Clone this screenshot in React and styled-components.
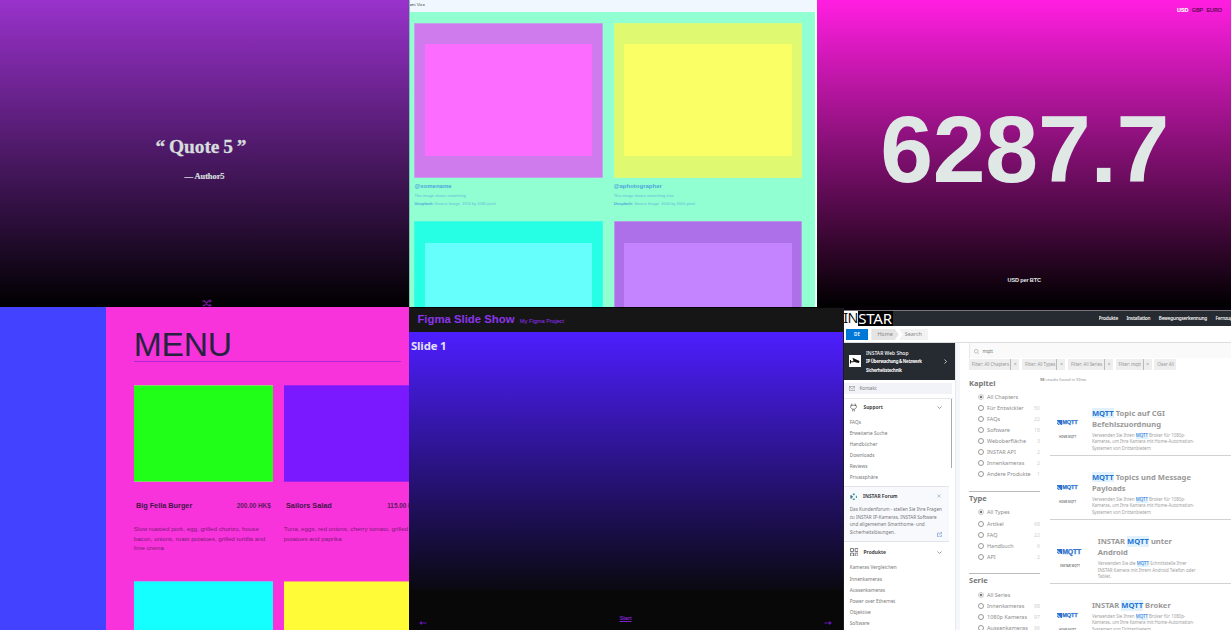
import React from "react";
import styled, { createGlobalStyle } from "styled-components";

const Global = createGlobalStyle`
  * { box-sizing: border-box; }
  html, body { margin: 0; padding: 0; overflow: hidden; background: #060008; }
`;
const sans = `"Liberation Sans", Arial, sans-serif`;
const noto = `"Noto Sans", "Open Sans", sans-serif`;

const Board = styled.main`
  width: 1231px; height: 630px; overflow: hidden;
  display: grid; grid-template-rows: 307px 323px;
  font-family: ${sans};
`;
const TopRow = styled.div`display: grid; grid-template-columns: 409px 408.4px 1fr; min-width: 0;`;
const BottomRow = styled.div`display: grid; grid-template-columns: 409px 435px 387px; min-width: 0;`;

/* Quote */
const QuotePanel = styled.section`
  background: linear-gradient(#9932cc, #000);
  display: flex; flex-direction: column; align-items: center;
  padding-top: 134px; color: #d6dddd; font-family: "Liberation Serif", serif; font-weight: 700;
`;
const Quote = styled.div`
  font-size: 19.4px; line-height: 26px; word-spacing: -0.9px; letter-spacing: -0.05px; padding-right: 7px;
  -webkit-text-stroke: 0.3px currentColor;
`;
const Author = styled.div`
  font-size: 8.5px; line-height: 12px; margin-top: 10px; letter-spacing: -0.1px;
  -webkit-text-stroke: 0.2px currentColor;
`;
const Shuffle = styled.svg`width: 10px; height: 8px; margin-top: auto; margin-left: 5px; display: block;`;

/* Gallery */
const Gallery = styled.section`
  background: #92ffd2; border-right: 2px solid #eafff6; border-left: 1px solid #78c8ad;
  overflow: hidden; display: flex; flex-direction: column;
`;
const GalleryBar = styled.header`
  flex: none; height: 12.4px; background: #f0f7ff; display: flex;
`;
const GalleryBrand = styled.div`
  width: 15.2px; overflow: hidden; display: flex; justify-content: flex-end; white-space: nowrap;
  font-size: 4.4px; line-height: 10px; color: #444;
`;
const PhotoGrid = styled.div`
  display: grid; grid-template-columns: 188.6px 188.6px; column-gap: 10.7px;
  grid-auto-rows: 198.4px; padding: 10.3px 0 0 4.4px;
`;
const Photo = styled.figure`margin: 0;`;
const Mat = styled.div`
  height: 155.2px; padding: 21.8px 10.6px; background: ${(p) => p.$mat};
  box-shadow: inset 0 0 0 0.8px ${(p) => p.$edge};
`;
const Print = styled.div`height: 100%; background: ${(p) => p.$fill};`;
const Handle = styled.h3`margin: 4.2px 0 0; font-size: 6px; line-height: 8px; color: #4da5dc;`;
const Caption = styled.p`
  margin: ${(p) => p.$gap}px 0 0; font-size: 4px; line-height: 6px; color: #62b9dc; white-space: nowrap;
  b { color: #4da5dc; }
`;

/* Ticker */
const Ticker = styled.section`
  background: linear-gradient(#ff1ee0, #ff1ee0 0.5%, #000);
  display: flex; flex-direction: column; align-items: center; color: #e0e8e6; font-weight: 700;
`;
const Currencies = styled.nav`
  align-self: flex-end; display: flex; gap: 3.3px; padding: 7px 9px 0 0;
  font-size: 5.4px; line-height: 7px; font-weight: 400; color: #52084a;
`;
const Currency = styled.span`
  ${(p) => p.$on && "color: #fff; font-weight: 700;"}
  -webkit-text-stroke: 0.15px currentColor;
`;
const Rate = styled.div`font-size: 95px; line-height: 100px; margin: 85px 0 0 1px; letter-spacing: -0.3px;`;
const Unit = styled.div`font-size: 5.6px; line-height: 8px; margin-top: 77px; letter-spacing: -0.17px;`;

/* Menu */
const MenuPanel = styled.section`
  display: grid; grid-template-columns: 105.7px 1fr; overflow: hidden; background: #f933dc;
`;
const MenuSide = styled.aside`background: #4343ff;`;
const MenuBody = styled.div`padding: 19px 0 0 28px; min-width: 0;`;
const MenuTitle = styled.h1`
  margin: 0; width: 267.3px; height: 35.8px; font-weight: 400; font-size: 33.6px; line-height: 37px;
  letter-spacing: -0.2px; color: #25233f; border-bottom: 1px solid #b126d6;
`;
const Dishes = styled.div`
  margin-top: 22.8px; display: grid; grid-template-columns: 139.3px 139.3px; column-gap: 10.8px; grid-auto-rows: 196.3px;
`;
const Dish = styled.article`min-width: 0;`;
const Plate = styled.div`
  height: 97px; background: ${(p) => p.$fill};
  border-top: 1px solid ${(p) => p.$edge}; border-bottom: 1px solid ${(p) => p.$edge};
`;
const DishHead = styled.div`
  display: flex; justify-content: space-between; align-items: center; height: 9px; padding: 0 2.2px;
  margin-top: 19.5px; color: #3d1747; font-weight: 700; font-size: 7.3px; white-space: nowrap;
`;
const Price = styled.span`font-size: 6.4px; color: #5c1c62;`;
const DishText = styled.p`margin: 14.4px 0 0; font-size: 6.2px; line-height: 9.35px; color: #7b1c76; white-space: pre;`;

/* Slides */
const Slides = styled.section`
  margin-top: 0.7px; background: #080808; border-right: 1.6px solid #1c1a20;
  display: flex; flex-direction: column; overflow: hidden;
`;
const SlidesBar = styled.header`
  flex: none; height: 24px; padding-left: 8.4px; background: #161616; display: flex; gap: 5.3px; color: #8c35ea;
`;
const SlidesTitle = styled.h2`margin: 0; font-size: 11.35px; line-height: 23px;`;
const SlidesSub = styled.span`font-size: 5.7px; line-height: 26px; color: #7a29d0; -webkit-text-stroke: 0.15px currentColor;`;
const Stage = styled.div`
  height: 258.6px; padding: 5px 2px; background: linear-gradient(#4d1eff, #0a0910);
  color: #e3e0fa; font: 700 11.4px/18px "Open Sans", ${noto}; letter-spacing: -0.2px;
`;
const Controls = styled.footer`
  flex: 1; display: flex; justify-content: space-between; padding: 23.6px 11px 0 10px; color: #6a1cc0;
`;
const Arrow = styled.svg`width: 8px; height: 4px; margin-top: 7px;`;
const Start = styled.a`
  font-size: 5.7px; line-height: 8px; text-decoration: underline; color: #7a22c8; -webkit-text-stroke: 0.2px currentColor;
`;

/* Support site */
const Site = styled.section`
  border-top: 3.3px solid #07000a; background: #fff; overflow: hidden;
  display: flex; flex-direction: column; font-family: ${noto}; color: #777; min-width: 0;
`;
const SiteBar = styled.header`
  flex: none; height: 16px; background: #262a31; border-top: 0.7px solid #777; display: flex; justify-content: space-between;
`;
const Brand = styled.div`
  display: flex; width: 49.5px; font-size: 15px; line-height: 14.6px; height: 15px; white-space: nowrap;
`;
const BrandIn = styled.span`
  width: 14.3px; background: #fff; color: #111; font-size: 14.4px; letter-spacing: -0.5px; text-indent: -0.8px;
`;
const BrandStar = styled.span`width: 35.2px; background: #000; color: #fff; letter-spacing: -0.25px;`;
const SiteNav = styled.nav`
  width: 132.5px; display: flex; gap: 8.4px; white-space: nowrap; overflow: hidden;
  font-size: 4.7px; line-height: 14.6px; color: #f4f4f4; font-weight: 600; letter-spacing: -0.19px;
`;
const Crumbs = styled.div`
  flex: none; height: 17.2px; padding: 2.8px 2px; display: flex; border-bottom: 1px solid #ddd;
  font-size: 5.4px; line-height: 11px; text-align: center;
`;
const Lang = styled.span`width: 22px; height: 11.3px; background: #0078d7; color: #fff; font-size: 4.5px; font-weight: 600; margin-right: 3.3px;`;
const Crumb = styled.span`
  width: ${(p) => p.$w}px; height: 11.3px; background: ${(p) => p.$bg}; color: #888;
  clip-path: ${(p) => (p.$point ? "polygon(0 0, 85% 0, 100% 50%, 85% 100%, 0 100%)" : "polygon(0 0, 100% 0, 100% 100%, 0 100%, 14% 50%)")};
`;
const SiteBody = styled.div`display: grid; grid-template-columns: 111px 5px 271px; flex: 1; min-height: 0;`;
const Gutter = styled.div`background: #f6f7fb; border-left: 1px solid #e6e8f2;`;
const Sidebar = styled.aside`min-width: 0; color: #777; font-size: 4.75px;`;
const Promo = styled.div`
  height: 36.6px; background: #262a31; color: #fff; display: flex; align-items: center; padding: 0 8px 0 5px;
`;
const PromoIcon = styled.svg`width: 12px; height: 12px; margin-right: 5px; background: #fff;`;
const PromoText = styled.div`flex: 1; font-size: 4.3px; line-height: 8.6px; font-weight: 700; white-space: pre; letter-spacing: -0.24px;`;
const PromoName = styled.div`font-size: 5px; font-weight: 500; letter-spacing: 0;`;
const Glyph = styled.svg`
  width: ${(p) => p.$w}px; height: ${(p) => p.$h || p.$w}px; fill: none; stroke: ${(p) => p.$c || "#777"};
  stroke-width: ${(p) => p.$s || 1}; flex: none;
`;
const Contact = styled.div`
  margin: 3px 3.5px 4px 0; height: 11.2px; background: #f2f3f9; display: flex; align-items: center;
  gap: 4px; padding-left: 5px;
`;
const Scroll = styled.div`
  border-top: 1px solid #e5e5ea; margin: 0 2px 2.2px 0;
  background: linear-gradient(#aaa, #aaa) right 1px top / 1px 69px no-repeat;
`;
const SideHead = styled.div`
  height: ${(p) => p.$h}px; display: flex; align-items: center; color: #444; font-weight: 700; font-size: 4.85px;
  padding: 0 ${(p) => p.$r || 11.5}px 0 5.5px; gap: ${(p) => p.$gap || 5.5}px;
`;
const SideLabel = styled.span`flex: 1;`;
const SideList = styled.div`padding: ${(p) => p.$t}px 0 0 5.7px; line-height: 11.15px; white-space: nowrap;`;
const Forum = styled.div`
  margin-right: 6px; height: 56.5px; background: #f8f9fd; border-top: 1px solid #e2e4ea; border-bottom: 1px solid #e2e4ea;
  display: flex; flex-direction: column;
`;
const ForumText = styled.p`margin: 0; padding-left: 5.7px; line-height: 7.45px; font-size: 4.65px; white-space: pre;`;
const ForumLink = styled.div`display: flex; justify-content: flex-end; padding-right: 7px; margin-top: -4.4px;`;

const Content = styled.div`min-width: 0; padding-left: 9px; background: #fff;`;
const SearchBox = styled.div`
  height: 15.2px; background: #fafafa; border-left: 1px solid #e8e8e8; display: flex; align-items: center;
  gap: 3px; padding: 1px 0 0 4px; font-size: 4.6px;
`;
const Tags = styled.div`display: flex; gap: 2.7px; height: 11px; padding-top: 0.6px;`;
const Tag = styled.span`
  display: flex; width: ${(p) => p.$w}px; height: 10.6px; background: #eeeeee; color: #969696;
  font-size: 4.35px; line-height: 10.6px; white-space: nowrap; justify-content: space-between; padding-left: 2.8px;
`;
const TagX = styled.span`width: 9px; border-left: 1px solid #bbb; text-align: center; font-size: 4.5px;`;
const Columns = styled.div`display: grid; grid-template-columns: 71px 191px;`;
const Filters = styled.div`padding-top: 8.4px;`;
const FilterGroup = styled.div`height: ${(p) => p.$h}px; border-bottom: ${(p) => (p.$last ? 0 : 1)}px solid #bbb; margin-bottom: 1px;`;
const FilterName = styled.h4`margin: 0; font-size: 7.5px; line-height: 11px; color: #777; height: 13.3px;`;
const Option = styled.div`
  height: ${(p) => (p.$all ? 11.8 : 10.95)}px; display: flex; align-items: center; padding-left: 9px; gap: 3px;
  font-size: 5.5px; color: #8b8b8b; white-space: nowrap;
`;
const Radio = styled.i`
  width: 6px; height: 6px; border-radius: 50%; border: 0.8px solid #999; flex: none;
  ${(p) => p.$on && "background: radial-gradient(#777 35%, #eee 55%); border-color: #ccc;"}
`;
const Count = styled.span`margin-left: auto; color: #d0d0d0; font-size: 5.2px;`;
const Results = styled.div`min-width: 0;`;
const Found = styled.div`font-size: 4px; line-height: 6px; height: 22.2px; padding-top: 8px; color: #909090;`;
const Result = styled.article`
  height: 64.1px; margin-left: 10px; padding: 16.5px 0 0 7px; display: grid; border-bottom: 1px solid #d2d2d2;
  grid-template-columns: ${(p) => (p.$wide ? 40.7 : 34.9)}px 1fr;
`;
const Thumb = styled.div`
  width: ${(p) => (p.$wide ? 26 : 21)}px; padding-top: 11.4px; text-align: center;
  font: 600 ${(p) => (p.$wide ? 3 : 2.8)}px/6px ${noto}; color: #777;
`;
const MqttLogo = styled.div`
  display: flex; align-items: center; gap: 0.2px; height: 7px; margin-bottom: 8px; color: #2d72cf;
  font: 700 ${(p) => (p.$wide ? 6.9 : 5.7)}px/7px ${sans}; letter-spacing: -0.2px; -webkit-text-stroke: 0.25px currentColor;
`;
const ResultTitle = styled.h3`margin: 0 0 1.3px; font-size: 7.6px; line-height: 11.2px; color: #999; white-space: pre;`;
const ResultText = styled.p`margin: 0; font-size: 4.38px; line-height: 6.6px; color: #a0a0a0; white-space: pre;`;
const Mark = styled.mark`display: inline-block; line-height: 1.35; margin: -0.1em 0; background: #e2f2fd; color: #2474d4;`;

const photos = [
  { mat: "#cf7bee", edge: "#bfaee6", fill: "#fc6cff", name: "@somename", text: "This image shows something", size: "1920 by 1080" },
  { mat: "#dff970", edge: "#d2fb86", fill: "#faff65", name: "@aphotographer", text: "This image shows something else", size: "4000 by 3000" },
  { mat: "#26ffe4", edge: "#50fadc", fill: "#66fffb" },
  { mat: "#ae70e8", edge: "#b6a5e4", fill: "#c584ff" },
];
const dishes = [
  { fill: "#20ff18", edge: "#8ccf70", name: "Big Fella Burger", price: "200.00 HK$", text: "Slow roasted pork, egg, grilled chorizo, house\nbacon, onions, roast potatoes, grilled tortilla and\nlime crema" },
  { fill: "#7a18ff", edge: "#a022f2", name: "Sailors Salad", price: "115.00 HK$", text: "Tuna, eggs, red onions, cherry tomato, grilled\npotatoes and paprika" },
  { fill: "#14ffff", edge: "#76b9ef" },
  { fill: "#fffb37", edge: "#fc9c82" },
];
const supportLinks = ["FAQs", "Erweiterte Suche", "Handbücher", "Downloads", "Reviews", "Privatsphäre"];
const productLinks = ["Kameras Vergleichen", "Innenkameras", "Aussenkameras", "Power over Ethernet", "Objektive", "Software"];
const filters = [
  { name: "Kapitel", h: 114.5, all: "All Chapters", items: [["Für Entwickler", 50], ["FAQs", 22], ["Software", 18], ["Weboberfläche", 3], ["INSTAR API", 2], ["Innenkameras", 2], ["Andere Produkte", 1]] },
  { name: "Type", h: 81.2, all: "All Types", items: [["Artikel", 68], ["FAQ", 22], ["Handbuch", 6], ["API", 2]] },
  { name: "Serie", h: 60, all: "All Series", items: [["Innenkameras", 98], ["1080p Kameras", 97], ["Aussenkameras", 96]] },
];
const brokerText = ["Verwenden Sie Ihren ", " Broker für 1080p-\nKameras, um Ihre Kamera mit Home-Automation-\nSystemen von Drittanbietern"];
const results = [
  { title: ["", " Topic auf CGI\nBefehlszuordnung"], text: brokerText, cap: "HOME MQTT" },
  { title: ["", " Topics und Message\nPayloads"], text: brokerText, cap: "HOME MQTT" },
  { wide: true, title: ["INSTAR ", " unter\nAndroid"], text: ["Verwenden Sie die ", "-Schnittstelle Ihrer\nINSTAR Kamera mit Ihrem Android Telefon oder\nTablet."], cap: "INSTAR MQTT" },
  { title: ["INSTAR ", " Broker"], text: brokerText, cap: "HOME MQTT" },
];
const tags = [["Filter: All Chapters", 50.4], ["Filter: All Types", 43.4], ["Filter: All Series", 44.8], ["Filter: mqtt", 36]];

const Marked = ({ parts }) => <>{parts[0]}<Mark>MQTT</Mark>{parts[1]}</>;
const Chevron = () => <Glyph viewBox="0 0 10 6" $w={5} $h={3} $s={1.4}><path d="M1 1l4 4 4-4" /></Glyph>;

const App = () => (
  <>
    <Global />
    <Board>
      <TopRow>
        <QuotePanel>
          <Quote>“ Quote 5 ”</Quote>
          <Author>— Author5</Author>
          <Shuffle viewBox="0 0 20 16" fill="none" stroke="#6a1695" strokeWidth="2.6">
            <path d="M1 4h4l8 9h4M1 13h4l8-9h4" /><path d="M15 0l5 4-5 4zM15 9l5 4-5 3z" fill="#6a1695" stroke="none" />
          </Shuffle>
        </QuotePanel>
        <Gallery>
          <GalleryBar><GalleryBrand>Miami Vice</GalleryBrand></GalleryBar>
          <PhotoGrid>
            {photos.map((p) => (
              <Photo key={p.fill}>
                <Mat $mat={p.mat} $edge={p.edge}><Print $fill={p.fill} /></Mat>
                {p.name && (
                  <>
                    <Handle>{p.name}</Handle>
                    <Caption $gap={2.9}>{p.text}</Caption>
                    <Caption $gap={2.3}><b>Unsplash:</b> Source Image: {p.size} pixel.</Caption>
                  </>
                )}
              </Photo>
            ))}
          </PhotoGrid>
        </Gallery>
        <Ticker>
          <Currencies><Currency $on>USD</Currency><Currency>GBP</Currency><Currency>EURO</Currency></Currencies>
          <Rate>6287.7</Rate>
          <Unit>USD per BTC</Unit>
        </Ticker>
      </TopRow>
      <BottomRow>
        <MenuPanel>
          <MenuSide />
          <MenuBody>
            <MenuTitle>MENU</MenuTitle>
            <Dishes>
              {dishes.map((d) => (
                <Dish key={d.fill}>
                  <Plate $fill={d.fill} $edge={d.edge} />
                  {d.name && (
                    <>
                      <DishHead>{d.name}<Price>{d.price}</Price></DishHead>
                      <DishText>{d.text}</DishText>
                    </>
                  )}
                </Dish>
              ))}
            </Dishes>
          </MenuBody>
        </MenuPanel>
        <Slides>
          <SlidesBar><SlidesTitle>Figma Slide Show</SlidesTitle><SlidesSub>My Figma Project</SlidesSub></SlidesBar>
          <Stage>Slide 1</Stage>
          <Controls>
            <Arrow viewBox="0 0 16 8"><path d="M0 4l6-4v2.8h9v2.4H6V8z" fill="#6514b8" /></Arrow>
            <Start>Start</Start>
            <Arrow viewBox="0 0 16 8"><path d="M16 4l-6-4v2.8H1v2.4h9V8z" fill="#6514b8" /></Arrow>
          </Controls>
        </Slides>
        <Site>
          <SiteBar>
            <Brand><BrandIn>IN</BrandIn><BrandStar>STAR</BrandStar></Brand>
            <SiteNav><span>Produkte</span><span>Installation</span><span>Bewegungserkennung</span><span>Fernzugriff</span></SiteNav>
          </SiteBar>
          <Crumbs>
            <Lang>DE</Lang><Crumb $w={27.5} $bg="#e4e4e4" $point>Home</Crumb><Crumb $w={29} $bg="#f2f2f2">Search</Crumb>
          </Crumbs>
          <SiteBody>
            <Sidebar>
              <Promo>
                <PromoIcon viewBox="0 0 12 12">
                  <path d="M3.500 2.800L10.500 6 10 8 7 7.400 4.500 6.500z" fill="#111" /><path d="M1.500 5v3.500M1.500 6.800h3l1-1.500" fill="none" stroke="#111" />
                </PromoIcon>
                <PromoText><PromoName>INSTAR Web Shop</PromoName>{"IP Überwachung & Netzwerk\nSicherheitstechnik"}</PromoText>
                <Glyph viewBox="0 0 6 10" $w={3} $h={5} $c="#fff" $s={1.4}><path d="M1 1l4 4-4 4" /></Glyph>
              </Promo>
              <Contact>
                <Glyph viewBox="0 0 12 9" $w={6.4} $h={5}><path d="M.5.5h11v8H.5zM.5 1L6 5.500 11.500 1" /></Glyph>Kontakt
              </Contact>
              <Scroll>
                <SideHead $h={16.4} $gap={7}>
                  <Glyph viewBox="0 0 12 16" $w={7} $h={9} $c="#555" $s={1.2}><path d="M3 1v4M9 1v4M1 4h2M9 4h2M1 5v3l3 3h4l3-3V5L8 4H4zM4.500 11v4M7.500 11v4" /></Glyph>
                  <SideLabel>Support</SideLabel><Chevron />
                </SideHead>
                <SideList $t={1.2}>{supportLinks.map((t) => <div key={t}>{t}</div>)}</SideList>
              </Scroll>
              <Forum>
                <SideHead $h={19.5} $r={8} $gap={6}>
                  <Glyph viewBox="0 0 14 14" $w={7.6} $c="#3f9f97" $s={2.6}><path d="M5 2h4M5 12h4M12 5v4M7 1v3M7 10v3" /><path d="M2 4v6M1 7h4" stroke="#3d6d80" /></Glyph>
                  <SideLabel>INSTAR Forum</SideLabel>
                  <Glyph viewBox="0 0 8 8" $w={4} $c="#5b9bd8"><path d="M1 1l6 6M7 1L1 7" /></Glyph>
                </SideHead>
                <ForumText>{"Das Kundenforum - stellen Sie Ihre Fragen\nzu INSTAR IP-Kameras, INSTAR Software\nund allgemeinen Smarthome- und\nSicherheitslösungen."}</ForumText>
                <ForumLink>
                  <Glyph viewBox="0 0 10 10" $w={5.4} $c="#4c7fc8"><path d="M5 2H1v7h7V5M4 6l5-5M6 .5h3.500V4" /></Glyph>
                </ForumLink>
              </Forum>
              <SideHead $h={20} $r={13.5}>
                <Glyph viewBox="0 0 16 16" $w={8.6} $c="#555" $s={1.4}><path d="M1 1h5.500v5.500H1zM9.500 1H15v5.500H9.500zM1 9.500h5.500V15H1zM9.500 9.500H15V15H9.500z" /></Glyph>
                <SideLabel>Produkte</SideLabel><Chevron />
              </SideHead>
              <SideList $t={0.2}>{productLinks.map((t) => <div key={t}>{t}</div>)}</SideList>
            </Sidebar>
            <Gutter />
            <Content>
              <SearchBox>
                <Glyph viewBox="0 0 10 10" $w={5.5} $c="#999"><circle cx="4" cy="4" r="3.300" /><path d="M6.500 6.500L9.500 9.500" /></Glyph>mqtt
              </SearchBox>
              <Tags>
                {tags.map(([t, w]) => <Tag key={t} $w={w}>{t}<TagX>×</TagX></Tag>)}
                <Tag $w={21.6}>Clear All</Tag>
              </Tags>
              <Columns>
                <Filters>
                  {filters.map((f, i) => (
                    <FilterGroup key={f.name} $h={f.h} $last={i === 2}>
                      <FilterName>{f.name}</FilterName>
                      <Option $all><Radio $on />{f.all}</Option>
                      {f.items.map(([t, n]) => <Option key={t}><Radio />{t}<Count>{n}</Count></Option>)}
                    </FilterGroup>
                  ))}
                </Filters>
                <Results>
                  <Found><b>98</b> results found in 59ms</Found>
                  {results.map((r, i) => (
                    <Result key={i} $wide={r.wide}>
                      <Thumb $wide={r.wide}>
                        <MqttLogo $wide={r.wide}>
                          <svg width="5" height="5" viewBox="0 0 10 10"><path d="M0 0h10v10H8L0 2zM0 4l6 6H3L0 7z" fill="#2d72cf" /></svg>MQTT
                        </MqttLogo>
                        {r.cap}
                      </Thumb>
                      <div>
                        <ResultTitle><Marked parts={r.title} /></ResultTitle>
                        <ResultText><Marked parts={r.text} /></ResultText>
                      </div>
                    </Result>
                  ))}
                </Results>
              </Columns>
            </Content>
          </SiteBody>
        </Site>
      </BottomRow>
    </Board>
  </>
);

export default App;
